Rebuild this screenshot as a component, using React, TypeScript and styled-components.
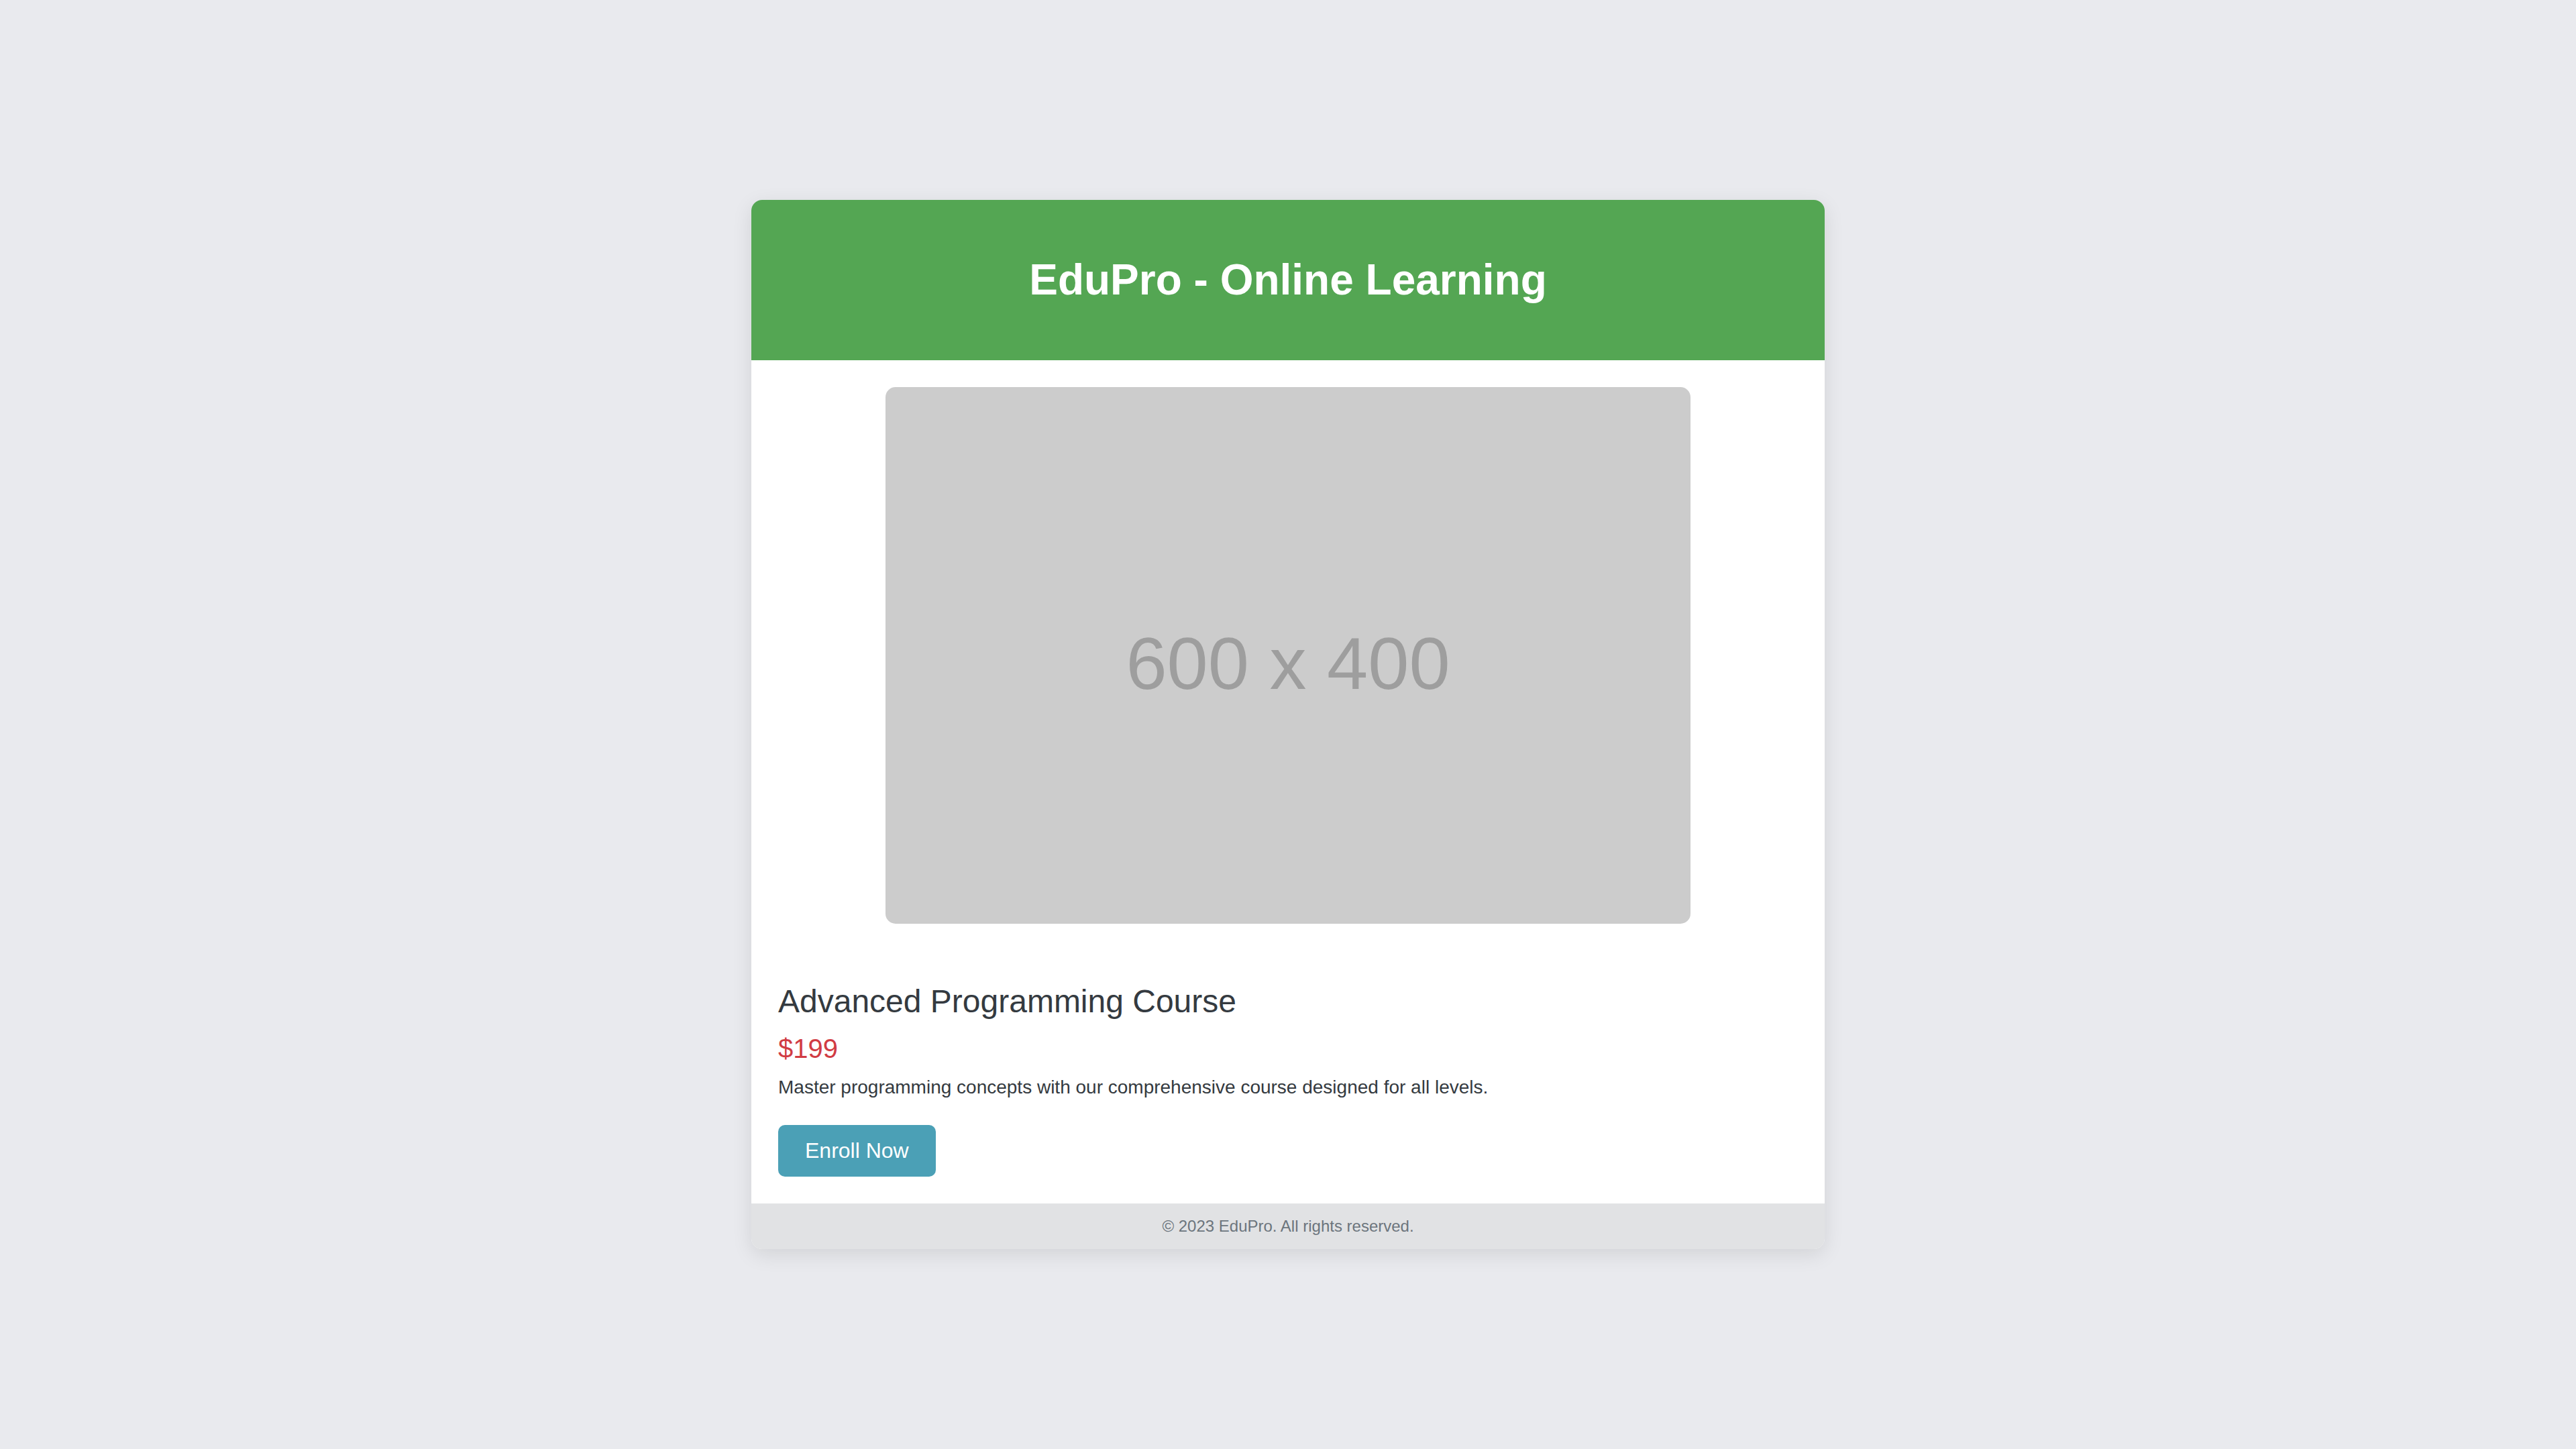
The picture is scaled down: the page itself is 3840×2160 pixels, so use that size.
import React from "react";
import styled, { createGlobalStyle } from "styled-components";

const GlobalStyle = createGlobalStyle`
  * { box-sizing: border-box; }
  html, body { margin: 0; padding: 0; }
  body {
    background: #e9eaee;
    font-family: "Liberation Sans", Arial, Helvetica, sans-serif;
  }
`;

const Page = styled.main`
  min-height: 100vh;
  display: flex;
  align-items: center;
  justify-content: center;
`;

const Card = styled.article`
  width: 1600px;
  background: #ffffff;
  border-radius: 16px;
  overflow: hidden;
  box-shadow: 0 8px 30px rgba(0, 0, 0, 0.1);
  display: flex;
  flex-direction: column;
`;

const Header = styled.header`
  background: #54a653;
  height: 239px;
  display: flex;
  align-items: center;
  justify-content: center;
`;

const Brand = styled.h1`
  margin: 0;
  color: #ffffff;
  font-size: 64px;
  line-height: 75px;
  font-weight: 700;
`;

const Media = styled.div`
  display: flex;
  justify-content: center;
  padding-top: 40px;
`;

const Placeholder = styled.div`
  width: 1200px;
  height: 800px;
  border-radius: 15px;
  background: #cccccc;
  color: #9e9e9e;
  font-size: 110px;
  display: flex;
  align-items: center;
  justify-content: center;
  padding-top: 22px;
`;

const Content = styled.section`
  padding: 88px 40px 40px;
  display: flex;
  flex-direction: column;
  align-items: flex-start;
`;

const Title = styled.h2`
  margin: 0 0 20px;
  color: #343a40;
  font-size: 48px;
  line-height: 55px;
  font-weight: 400;
`;

const Price = styled.p`
  margin: 0 0 19px;
  color: #d13c44;
  font-size: 40px;
  line-height: 46px;
`;

const Description = styled.p`
  margin: 0 0 40px;
  color: #343a40;
  font-size: 28px;
  line-height: 32px;
`;

const EnrollButton = styled.button`
  font-family: inherit;
  border: none;
  border-radius: 10px;
  background: #4ba0b6;
  color: #ffffff;
  font-size: 32px;
  line-height: 37px;
  padding: 20px 40px;
  cursor: pointer;
`;

const Footer = styled.footer`
  background: #e1e2e4;
  height: 68px;
  display: flex;
  align-items: center;
  justify-content: center;
  color: #6c757d;
  font-size: 24px;
`;

export default function App() {
  return (
    <>
      <GlobalStyle />
      <Page>
        <Card>
          <Header>
            <Brand>EduPro - Online Learning</Brand>
          </Header>
          <Media>
            <Placeholder>600 x 400</Placeholder>
          </Media>
          <Content>
            <Title>Advanced Programming Course</Title>
            <Price>$199</Price>
            <Description>
              Master programming concepts with our comprehensive course designed for all levels.
            </Description>
            <EnrollButton>Enroll Now</EnrollButton>
          </Content>
          <Footer>© 2023 EduPro. All rights reserved.</Footer>
        </Card>
      </Page>
    </>
  );
}
